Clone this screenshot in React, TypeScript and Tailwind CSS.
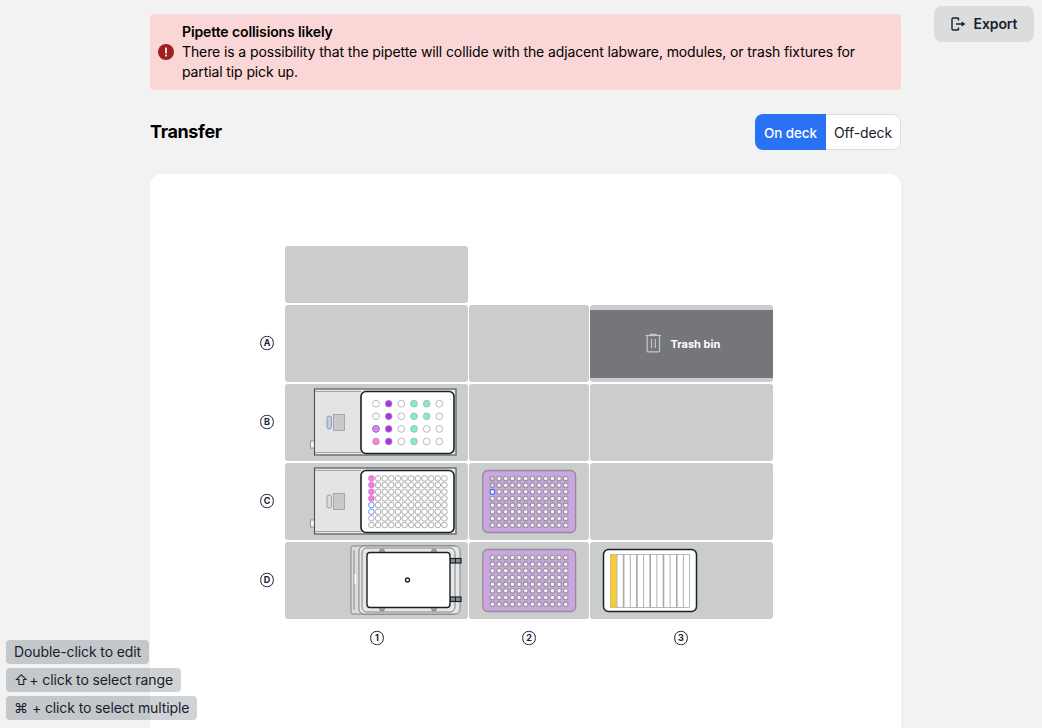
import React from "react";

const FONT = "font-['Inter','Liberation_Sans',sans-serif]";

// slots in page coordinates, the svg viewBox starts at 250,240
const slots = [
  [285, 246, 183, 57],
  [285, 305, 183, 77],
  [469, 305, 120, 77],
  [590, 305, 183, 77],
  [285, 384, 183, 77],
  [469, 384, 120, 77],
  [590, 384, 183, 77],
  [285, 463, 183, 77],
  [469, 463, 120, 77],
  [590, 463, 183, 77],
  [285, 542, 183, 77],
  [469, 542, 120, 77],
  [590, 542, 183, 77],
];

const P = "#f47fe0";
const V = "#ac30ea";
const G = "#80eec6";
const wells24 = [
  ["", V, "", G, G, ""],
  ["", V, "", G, G, ""],
  ["B", V, "", G, "", ""],
  [P, V, "", G, "", ""],
];

const Badge = ({ x, y, label }: { x: number; y: number; label: string }) => (
  <g>
    <rect x={x - 6.3} y={y - 6.6} width={12.6} height={13.2} rx={5.8} fill="#fff" stroke="#16212d" strokeWidth={1} />
    <text x={x} y={y + 3.2} textAnchor="middle" fontSize={9} fontWeight={700} fill="#16212d">
      {label}
    </text>
  </g>
);

const ThermoBase = ({ y, pill }: { y: number; pill: string }) => (
  <g>
    <rect x={310.5} y={y + 52} width={5} height={7} fill="#f4f4f4" stroke="#85888a" strokeWidth={0.8} />
    <rect x={314.5} y={y} width={141.5} height={66} fill="#e4e4e4" stroke="#4c4f53" strokeWidth={1.1} />
    <line x1={315} y1={y + 2.5} x2={361} y2={y + 2.5} stroke="#a3a5a7" strokeWidth={1} />
    <line x1={315} y1={y + 63.5} x2={361} y2={y + 63.5} stroke="#a3a5a7" strokeWidth={1} />
    <rect x={327} y={y + 27} width={4.5} height={13} rx={2.2} fill={pill} stroke="#8e8e8e" strokeWidth={0.8} />
    <rect x={333.5} y={y + 25.5} width={11} height={16} fill="#c9c9c9" stroke="#9c9c9c" strokeWidth={0.8} />
    <rect x={361} y={y + 2.5} width={93} height={62} rx={5} fill="#fff" stroke="#16212d" strokeWidth={1.6} />
  </g>
);

const Plate96 = ({ y, marked }: { y: number; marked?: boolean }) => (
  <g>
    <rect x={482.8} y={y} width={92.8} height={62} rx={5} fill="#cba6e0" stroke="#918d96" strokeWidth={1.3} />
    {Array.from({ length: 8 }).map((_, r) =>
      Array.from({ length: 12 }).map((_, c) => {
        const cx = 492.4 + c * 6.67;
        const cy = y + 8 + r * 6.67;
        if (marked && r === 2 && c === 0) {
          return (
            <rect
              key={`${r}-${c}`}
              x={cx - 2.2}
              y={cy - 2.2}
              width={4.4}
              height={4.4}
              rx={1}
              fill="#fff"
              stroke="#2a6ff0"
              strokeWidth={1.1}
            />
          );
        }
        return (
          <circle
            key={`${r}-${c}`}
            cx={cx}
            cy={cy}
            r={2.3}
            fill={marked && c === 0 && r < 2 ? "#d4d4d4" : "#f4f2f6"}
            stroke="#96939b"
            strokeWidth={1.1}
          />
        );
      })
    )}
  </g>
);

const DeckMap = () => (
  <svg
    width={530}
    height={420}
    viewBox="250 240 530 420"
    fontFamily="Inter, 'Liberation Sans', sans-serif"
    letterSpacing={0}
  >
    {slots.map(([x, y, w, h]) => (
      <rect key={`${x}-${y}`} x={x} y={y} width={w} height={h} rx={3} fill="#cbcdcc" />
    ))}

    {/* TRASH */}
    <rect x={590} y={310} width={183} height={68} fill="#75767a" />
    <g fill="none" stroke="#c6c7c8" strokeWidth={1.2}>
      <path d="M645.7 335.5h15.3" />
      <path d="M650.5 335.3v-1h5.6v1" />
      <path d="M647.2 335.7v15.2a.9.9 0 0 0 .9.9h10.5a.9.9 0 0 0 .9-.9v-15.2" />
      <path d="M651.5 339v9M655.3 339v9" />
    </g>
    <text x={670.5} y={347.5} fontSize={11} fontWeight={700} fill="#fff">
      Trash bin
    </text>

    {/* B1 */}
    <ThermoBase y={389} pill="#b5d0f0" />
    {wells24.map((row, r) =>
      row.map((color, c) => (
        <circle
          key={`${r}-${c}`}
          cx={376 + c * 12.67}
          cy={403.7 + r * 12.6}
          r={3.4}
          fill={color === "B" ? P : color || "#fff"}
          stroke={color === "B" ? "#5a7fe0" : color ? "#a8aaaa" : "#9b9d9d"}
          strokeWidth={color === "B" ? 1 : 0.7}
        />
      ))
    )}

    {/* C1 */}
    <ThermoBase y={468} pill="#dcdcdc" />
    {Array.from({ length: 8 }).map((_, r) =>
      Array.from({ length: 12 }).map((_, c) => {
        const pink = c === 0 && r < 4;
        const blue = c === 0 && (r === 4 || r === 5);
        return (
          <circle
            key={`${r}-${c}`}
            cx={371.4 + c * 6.64}
            cy={478.4 + r * 6.66}
            r={2.8}
            fill={pink ? P : "#fff"}
            stroke={pink ? "#d86cc8" : blue ? "#4f86e6" : "#a3a3a3"}
            strokeWidth={0.9}
          />
        );
      })
    )}

    {/* D1 */}
    <g fill="none" stroke="#77797b" strokeWidth={0.9}>
      <rect x={351} y={546} width={105} height={68} rx={2} fill="#dcdcdc" />
      <rect x={359} y={546} width={101} height={68} rx={5} fill="#e6e6e6" />
      <rect x={362} y={548} width={93} height={64} rx={5} />
      <path d="M354 550v60" />
    </g>
    <rect x={354.5} y={574} width={1.5} height={10} fill="#fff" />
    <g fill="#a8a8a8" stroke="#6f6f6f" strokeWidth={0.7}>
      <circle cx={382} cy={551.5} r={2.4} />
      <circle cx={434} cy={551.5} r={2.4} />
      <circle cx={382} cy={608.5} r={2.6} />
      <circle cx={434} cy={608.5} r={2.6} />
    </g>
    <g fill="#8c8e90" stroke="#16212d" strokeWidth={1.2}>
      <rect x={450} y={558.5} width={11} height={4.5} />
      <rect x={450} y={597} width={11} height={4.5} />
    </g>
    <path d="M455.5 558.5v4.5M455.5 597v4.5" stroke="#16212d" strokeWidth={1} />
    <rect x={367} y={552.5} width={83} height={55} rx={3} fill="#fff" stroke="#16212d" strokeWidth={1.4} />
    <circle cx={407.5} cy={580} r={2} fill="#fff" stroke="#16212d" strokeWidth={1.3} />

    <Plate96 y={470.5} marked />
    <Plate96 y={549.5} />

    {/* D3 */}
    <rect x={603.5} y={549.5} width={93} height={62} rx={5} fill="#fff" stroke="#16212d" strokeWidth={1.5} />
    <rect x={610.5} y={554.5} width={79} height={53} fill="#fff" stroke="#a6a9ac" strokeWidth={0.8} />
    <rect x={610.5} y={554.5} width={6.2} height={53} fill="#f8cb35" />
    {Array.from({ length: 11 }).map((_, i) => (
      <line
        key={i}
        x1={617 + i * 6.64}
        y1={554.5}
        x2={617 + i * 6.64}
        y2={607.5}
        stroke="#a6a9ac"
        strokeWidth={i % 2 === 0 ? 0.9 : 1.6}
      />
    ))}

    <Badge x={267} y={343} label="A" />
    <Badge x={267} y={422} label="B" />
    <Badge x={267} y={501} label="C" />
    <Badge x={267} y={580} label="D" />
    <Badge x={377} y={638} label="1" />
    <Badge x={529} y={638} label="2" />
    <Badge x={681} y={638} label="3" />
  </svg>
);

const hints = [
  { glyph: "", gap: "gap-0", text: "Double-click to edit" },
  { glyph: "⇧", gap: "gap-[1px]", text: "+ click to select range" },
  { glyph: "⌘", gap: "gap-1", text: "+ click to select multiple" },
];

export default function App() {
  return (
    <div className={`relative h-[728px] overflow-hidden bg-[#f2f2f2] text-[14px] leading-5 tracking-[-0.11px] text-[#16212d] ${FONT}`}>
      {/* EXPORT */}
      <button className="absolute right-2 top-[6px] flex h-9 w-[100px] items-center justify-center gap-2 rounded-lg bg-[#dcdcdc] font-semibold text-[#16212d]">
        <svg width="15" height="14" viewBox="0 0 15 14" fill="none">
          <path
            d="M7.5 1H2.2A1.2 1.2 0 0 0 1 2.2v9.6A1.2 1.2 0 0 0 2.2 13h5.3"
            stroke="#16212d"
            strokeWidth="1.4"
          />
          <path d="M7.5 1v2.5M7.5 10.5V13M5 7h6" stroke="#16212d" strokeWidth="1.4" />
          <path d="M10.5 4.6 14.5 7l-4 2.4z" fill="#16212d" />
        </svg>
        Export
      </button>

      <div className="ml-[150px] w-[751px] pt-[14px]">
        {/* ALERT */}
        <div className="flex items-center gap-2 rounded bg-[#fad6d6] px-2 py-2 text-black">
          <svg width="16" height="16" viewBox="0 0 16 16" className="shrink-0">
            <circle cx="8" cy="8" r="8" fill="#9e2020" />
            <rect x="7" y="3.5" width="2" height="6" rx="0.6" fill="#fad6d6" />
            <rect x="7" y="10.6" width="2" height="2" rx="0.5" fill="#fad6d6" />
          </svg>
          <div>
            <p className="font-semibold">Pipette collisions likely</p>
            <p>
              There is a possibility that the pipette will collide with the adjacent labware, modules, or trash
              fixtures for partial tip pick up.
            </p>
          </div>
        </div>

        {/* TITLE */}
        <div className="mt-6 flex items-center justify-between">
          <h1 className="text-[18px] font-bold tracking-[-0.35px] text-black">Transfer</h1>
          <div className="flex h-9">
            <button className="w-[71px] rounded-l-lg bg-[#2a72f5] pt-px text-[13.5px] font-medium text-white">On deck</button>
            <button className="w-[75px] rounded-r-lg border border-l-0 border-[#dedede] bg-white pt-px">Off-deck</button>
          </div>
        </div>

        {/* DECK */}
        <div className="mt-6 h-[600px] rounded-xl bg-white pl-[100px] pt-[66px]">
          <DeckMap />
        </div>
      </div>

      {/* HINTS */}
      <div className="absolute bottom-2 left-[6px] flex flex-col items-start gap-1">
        {hints.map((hint) => (
          <div key={hint.text} className={`flex h-6 items-center whitespace-pre rounded bg-[#16212d]/20 px-2 ${hint.gap}`}>
            {hint.glyph && <span>{hint.glyph}</span>}
            <span>{hint.text}</span>
          </div>
        ))}
      </div>
    </div>
  );
}
